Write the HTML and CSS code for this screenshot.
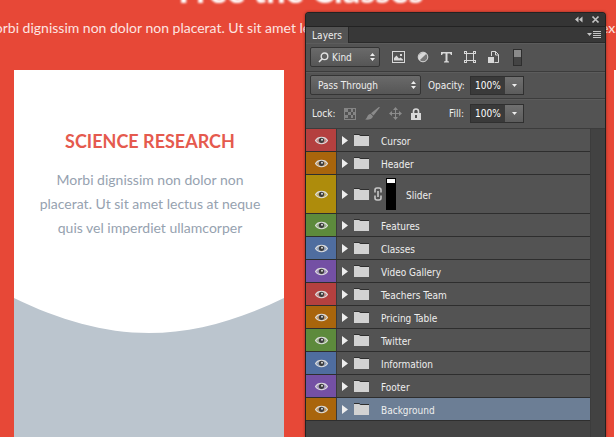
FILE: index.html
```html
<!DOCTYPE html>
<html lang="en">
<head>
    <meta charset="UTF-8">
    <meta name="viewport" content="width=device-width, initial-scale=1.0">
    <title>Classes</title>
    <link rel="stylesheet" href="styles.css">
</head>
<body>
    <!-- Web page on the canvas -->
    <main class="classes">
        <h1>Free the Classes</h1>
        <p class="intro">Morbi dignissim non dolor non placerat. Ut sit amet lectus at neque quis vel imperdiet ullamcorper ut ex.</p>
        <div class="cards">
            <article class="card">
                <div class="card-text">
                    <h2>SCIENCE RESEARCH</h2>
                    <p>Morbi dignissim non dolor non placerat. Ut sit amet lectus at neque quis vel imperdiet ullamcorper</p>
                </div>
                <svg class="curve" viewBox="0 0 270 36" preserveAspectRatio="none"><path d="M0 0C45 22 90 35 135 35S225 22 270 0V36H0Z" fill="#bbc5ce"/></svg>
                <div class="card-image"></div>
            </article>
            <article class="card"></article>
            <article class="card"></article>
        </div>
    </main>

    <!-- Layers panel -->
    <aside class="panel">
        <div class="panel-top">
            <button aria-label="Collapse"><svg width="8" height="7" viewBox="0 0 8 7"><path d="M3.5 0.5V6.5L0 3.5ZM7.5 0.5V6.5L4 3.5Z" fill="#c4c4c4"/></svg></button>
            <button aria-label="Close"><svg width="7" height="7" viewBox="0 0 7 7"><path d="M1 1L6 6M6 1L1 6" stroke="#c4c4c4" stroke-width="1.6"/><path d="M0 1h2M5 1h2M0 6h2M5 6h2" stroke="#c4c4c4"/></svg></button>
        </div>
        <div class="tabs">
            <button class="tab">Layers</button>
            <button class="menu" aria-label="Panel menu"><svg width="14" height="8" viewBox="0 0 14 8"><path d="M0 2H5L2.5 5Z" fill="#c4c4c4"/><path d="M6 .5h8M6 2.5h8M6 4.5h8M6 6.5h8" stroke="#c4c4c4"/></svg></button>
        </div>

        <div class="bar filter-bar">
            <div class="select kind">
                <svg class="search" width="11" height="11" viewBox="0 0 11 11"><circle cx="6.5" cy="4.3" r="3.3" fill="none" stroke="#e0e0e0" stroke-width="1.4"/><path d="M4.2 6.7L1 10" stroke="#e0e0e0" stroke-width="1.6"/></svg>
                <select aria-label="Filter type"><option>Kind</option></select>
                <svg class="updown" width="5" height="8" viewBox="0 0 5 8"><path d="M0 3L2.5 0L5 3ZM0 5L2.5 8L5 5Z" fill="#eee"/></svg>
            </div>
            <div class="filters">
                <button aria-label="Pixel layers"><svg width="13" height="12" viewBox="0 0 13 12"><rect x=".5" y=".5" width="12" height="11" fill="none" stroke="#d8d8d8"/><path d="M2 9.5V7L4.5 4.5L7 7.5L8.5 6.5L11 8.5V9.5Z" fill="#d8d8d8"/><rect x="8" y="3" width="2" height="2" fill="#d8d8d8"/></svg></button>
                <button aria-label="Adjustment layers"><svg width="12" height="12" viewBox="0 0 12 12"><circle cx="6" cy="6" r="4.8" fill="#777" stroke="#d8d8d8" stroke-width="1"/><path d="M9.6 2.4A5.2 5.2 0 0 0 2.4 9.6Z" fill="#d8d8d8"/></svg></button>
                <button aria-label="Type layers"><svg width="11" height="12" viewBox="0 0 11 12"><path d="M0 1H11V4H10L9 2.500H6.500V10L8 10.500V11.500H3V10.500L4.500 10V2.500H2L1 4H0Z" fill="#d8d8d8"/></svg></button>
                <button aria-label="Shape layers"><svg width="12" height="12" viewBox="0 0 12 12" fill="none" stroke="#d8d8d8"><path d="M2.5 3V9M9.5 3V9M3 2.5H9M3 9.5H9"/><g fill="#535353"><rect x=".5" y=".5" width="2" height="2"/><rect x="9.5" y=".5" width="2" height="2"/><rect x=".5" y="9.5" width="2" height="2"/><rect x="9.5" y="9.5" width="2" height="2"/></g></svg></button>
                <button aria-label="Smart objects"><svg width="11" height="12" viewBox="0 0 11 12"><path d="M3.5 5V.5H7.5L10.5 3.5V11.5H6.5M7.5 .5V4H10.5" fill="none" stroke="#d8d8d8"/><rect x="0" y="6" width="6" height="6" fill="#d8d8d8"/></svg></button>
                <button class="switch" aria-label="Turn filtering on"></button>
            </div>
        </div>

        <div class="bar blend-bar">
            <div class="select blend">
                <select aria-label="Blend mode"><option>Pass Through</option></select>
                <svg class="updown" width="5" height="8" viewBox="0 0 5 8"><path d="M0 3L2.5 0L5 3ZM0 5L2.5 8L5 5Z" fill="#eee"/></svg>
            </div>
            <label for="opacity">Opacity:</label>
            <div class="number">
                <input id="opacity" type="text" value="100%">
                <button aria-label="Opacity slider"><svg width="5" height="3" viewBox="0 0 5 3"><path d="M0 0H5L2.5 3Z" fill="#eee"/></svg></button>
            </div>
        </div>

        <div class="bar lock-bar">
            <span class="lock-label">Lock:</span>
            <div class="locks">
                <button aria-label="Lock transparent pixels"><svg width="12" height="12" viewBox="0 0 12 12"><rect x=".5" y=".5" width="11" height="11" fill="none" stroke="#858585"/><path d="M1 1h3v3H1ZM7 1h2v3H7ZM4 4h3v3H4ZM9 4h2v3H9ZM1 7h3v3H1ZM7 7h2v3H7Z" fill="#858585"/></svg></button>
                <button aria-label="Lock image pixels"><svg width="15" height="13" viewBox="0 0 15 13"><path d="M15 .2L8.500 8.500L6 6.300L13.800 0Z" fill="#8b8b8b"/><path d="M5.500 6.800L8 9.200C7 12.500 3 13 0 12.500C2.500 11.500 2 7.500 5.500 6.800Z" fill="#8b8b8b"/></svg></button>
                <button aria-label="Lock position"><svg width="13" height="13" viewBox="0 0 13 13"><path d="M6.500 2V11M2 6.500H11" stroke="#8b8b8b"/><path d="M6.500 0L9 3H4ZM6.500 13L9 10H4ZM0 6.500L3 4V9ZM13 6.500L10 4V9Z" fill="#8b8b8b"/></svg></button>
                <button aria-label="Lock all"><svg width="10" height="12" viewBox="0 0 10 12"><path d="M2.500 6V3.500a2.500 2.500 0 0 1 5 0V6" fill="none" stroke="#d8d8d8" stroke-width="1.600"/><rect x="0" y="5" width="10" height="7" fill="#d8d8d8"/><rect x="4" y="7" width="2" height="3" fill="#535353"/></svg></button>
            </div>
            <label for="fill">Fill:</label>
            <div class="number">
                <input id="fill" type="text" value="100%">
                <button aria-label="Fill slider"><svg width="5" height="3" viewBox="0 0 5 3"><path d="M0 0H5L2.5 3Z" fill="#eee"/></svg></button>
            </div>
        </div>

        <div class="layers">
            <ul id="layer-list"></ul>
            <div class="scrollbar"></div>
        </div>
    </aside>

    <script>
        const layers = [
            { name: 'Cursor', color: 'red' },
            { name: 'Header', color: 'orange' },
            { name: 'Slider', color: 'yellow', mask: true },
            { name: 'Features', color: 'green' },
            { name: 'Classes', color: 'blue' },
            { name: 'Video Gallery', color: 'violet' },
            { name: 'Teachers Team', color: 'red' },
            { name: 'Pricing Table', color: 'orange' },
            { name: 'Twitter', color: 'green' },
            { name: 'Information', color: 'blue' },
            { name: 'Footer', color: 'violet' },
            { name: 'Background', color: 'orange', selected: true }
        ];

        const eye = `<svg width="13" height="9" viewBox="0 0 13 9"><path d="M.5 4.500C3 .2 10 .2 12.500 4.500C10 8.800 3 8.800 .5 4.500Z" fill="#ddd" fill-opacity=".45" stroke="#ddd" stroke-width="1.200"/><circle cx="6.500" cy="4.300" r="2.600" fill="#3c3c3c"/><circle cx="7" cy="3.800" r="1" fill="#ddd"/></svg>`;
        const arrow = `<svg width="6" height="9" viewBox="0 0 6 9"><path d="M0 0L6 4.500L0 9Z" fill="#eee"/></svg>`;
        const folder = `<svg width="15" height="12" viewBox="0 0 15 12"><path d="M0 1H5L6 2H15V12H0Z" fill="#d2d2d2"/><path d="M0 .5H5.500L6.500 1.500H15" fill="none" stroke="#2e2e2e"/></svg>`;
        const mask = `
            <svg class="link" width="8" height="14" viewBox="0 0 8 14" fill="none" stroke="#c8c8c8" stroke-width="1.600"><path d="M1 5.500V3a2 2 0 0 1 2-2h2a2 2 0 0 1 2 2v2.500M1 8.500V11a2 2 0 0 0 2 2h2a2 2 0 0 0 2-2V8.500M4 4V10"/></svg>
            <span class="mask"></span>`;

        const list = document.getElementById('layer-list');
        layers.forEach(layer => {
            const row = document.createElement('li');
            row.className = 'layer' + (layer.mask ? ' tall' : '') + (layer.selected ? ' selected' : '');
            row.innerHTML = `
                <button class="eye ${layer.color}" aria-label="Toggle ${layer.name}">${eye}</button>
                <button class="arrow" aria-label="Expand ${layer.name}">${arrow}</button>
                ${folder}
                ${layer.mask ? mask : ''}
                <span class="name">${layer.name}</span>
            `;
            list.appendChild(row);
        });
    </script>
</body>
</html>
```
FILE: styles.css
```css
* {
    box-sizing: border-box;
}
body {
    margin: 0;
    height: 100vh;
    overflow: hidden;
    position: relative;
    background-color: #e74837;
    font-family: "DejaVu Sans Condensed", "DejaVu Sans", sans-serif;
    font-size: 10px;
}
h1, h2, p, ul {
    margin: 0;
    padding: 0;
}
button {
    display: flex;
    align-items: center;
    justify-content: center;
    padding: 0;
    border: 0;
    background: none;
    color: inherit;
    font: inherit;
}
svg {
    display: block;
    flex-shrink: 0;
}

/* page */
.classes {
    height: 100%;
    display: flex;
    flex-direction: column;
    overflow: hidden;
    font-family: Lato, sans-serif;
    text-align: center;
}
h1 {
    margin: -28px 14px 0 0;
    color: #fff;
    font-size: 34px;
    font-weight: 900;
    line-height: 36px;
    filter: blur(1px);
}
.intro {
    margin: 10px 0 0 -18px;
    color: #fde4e1;
    font-size: 14px;
    line-height: 20px;
    text-align: left;
    white-space: nowrap;
}
.cards {
    flex: 1;
    display: grid;
    grid-template-columns: repeat(3, 270px);
    gap: 30px;
    margin: 32px 0 0 14px;
}
.card {
    display: flex;
    flex-direction: column;
    background-color: #fff;
}
.card-text {
    height: 228px;
    padding: 59px 20px 0 22px;
}
h2 {
    color: #e55a4e;
    font-size: 18px;
    font-weight: bold;
    line-height: 24px;
}
.card-text p {
    margin-top: 15px;
    color: #96a2b0;
    font-size: 14px;
    line-height: 24px;
}
.curve {
    width: 100%;
    height: 36px;
}
.card-image {
    flex: 1;
    background-color: #bbc5ce;
}

/* panel */
.panel {
    position: absolute;
    top: 12px;
    right: 10px;
    bottom: 0;
    width: 301px;
    display: flex;
    flex-direction: column;
    border: 1px solid #222;
    border-bottom: 0;
    border-radius: 4px 4px 0 0;
    background-color: #444;
    color: #eee;
    box-shadow: 0 0 3px rgba(0, 0, 0, 0.4);
    overflow: hidden;
}
.panel-top {
    height: 13px;
    display: flex;
    align-items: center;
    justify-content: flex-end;
    gap: 9px;
    padding-right: 6px;
    background-color: #343434;
}
.tabs {
    height: 17px;
    display: flex;
    justify-content: space-between;
    padding-right: 4px;
    border-top: 1px solid #222;
    background-color: #383838;
    box-shadow: inset 0 -1px #2a2a2a;
}
.tab {
    width: 43px;
    border-right: 1px solid #2a2a2a;
    background-color: #535353;
}
.bar {
    display: flex;
    align-items: center;
    background-color: #535353;
    border-bottom: 1px solid #3c3c3c;
    box-shadow: inset 0 1px #5c5c5c;
}
.filter-bar {
    height: 29px;
    padding-left: 4px;
}
.blend-bar {
    height: 27px;
    padding-left: 4px;
}
.lock-bar {
    height: 30px;
    padding-left: 6px;
}
.select {
    position: relative;
    height: 20px;
    display: flex;
    align-items: center;
    border: 1px solid #343434;
    border-radius: 2px;
    background: linear-gradient(#6a6a6a, #565656);
}
.select select {
    appearance: none;
    width: 100%;
    height: 100%;
    padding: 0 0 0 7px;
    border: 0;
    background: none;
    color: #eee;
    font: inherit;
}
.kind {
    width: 70px;
}
.kind select {
    padding-left: 21px;
}
.search {
    position: absolute;
    left: 7px;
}
.updown {
    position: absolute;
    right: 4px;
}
.blend {
    width: 111px;
}
.filters {
    display: flex;
    align-items: center;
    gap: 12px;
    margin-left: 12px;
}
.switch {
    width: 9px;
    height: 17px;
    margin-left: 2px;
    border: 1px solid #2e2e2e;
    background: linear-gradient(#8a8a8a 50%, #444 50%);
}
.blend-bar label {
    margin-left: 7px;
    width: 42px;
}
.number {
    display: flex;
    height: 19px;
    border: 1px solid #303030;
}
.number input {
    width: 34px;
    padding: 0 0 0 4px;
    border: 0;
    background-color: #3a3a3a;
    color: #fff;
    font: inherit;
}
.number button {
    width: 18px;
    background: linear-gradient(#707070, #5c5c5c);
}
.lock-label {
    width: 32px;
}
.locks {
    display: flex;
    align-items: center;
    gap: 9px;
}
.lock-bar label {
    margin-left: 28px;
    width: 21px;
}
.layers {
    flex: 1;
    display: flex;
}
#layer-list {
    flex: 1;
    list-style: none;
}
.layer {
    height: 23px;
    display: flex;
    align-items: center;
    border-bottom: 1px solid #2e2e2e;
    background-color: #535353;
}
.tall {
    height: 39px;
}
.selected {
    background-color: #6c7e95;
}
.eye {
    width: 31px;
    height: 100%;
    border-right: 1px solid #3a3a3a;
}
.red { background-color: #b4403f; }
.orange { background-color: #a9650c; }
.yellow { background-color: #ae8c0c; }
.green { background-color: #5d8a3c; }
.blue { background-color: #4f6d9f; }
.violet { background-color: #7450a4; }
.arrow {
    margin: 0 6px 0 5px;
}
.name {
    margin-left: 12px;
    padding-top: 2px;
}
.link {
    margin-left: 5px;
}
.mask {
    width: 10px;
    height: 32px;
    margin-left: 4px;
    border: 1px solid #000;
    background: linear-gradient(#fff 4px, #000 4px);
}
.mask + .name {
    margin-left: 10px;
}
.scrollbar {
    width: 15px;
    background-color: #424242;
    border-left: 1px solid #3c3c3c;
}
```
